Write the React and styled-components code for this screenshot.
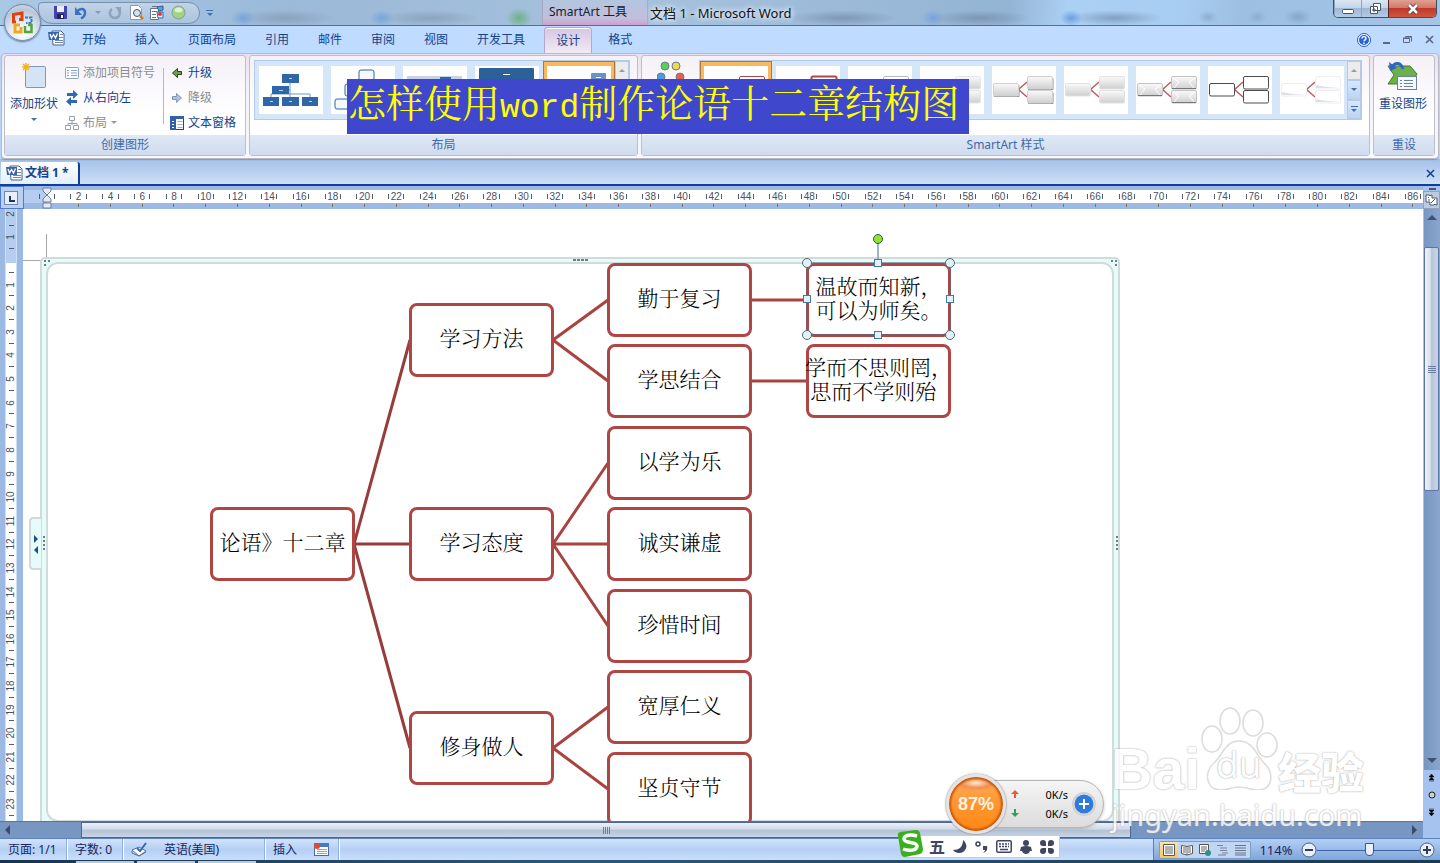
import React from 'react'
import styled, { createGlobalStyle, css } from 'styled-components'

const red = '#af4643'

const tabs = ['开始', '插入', '页面布局', '引用', '邮件', '审阅', '视图', '开发工具']
const rulerNumbers = Array.from({ length: 44 }, (_, i) => i * 2)
const sideNumbers = ['2', '1', '', ...Array.from({ length: 23 }, (_, i) => String(i + 1))]

// places on the drawing canvas
const nodes = [
    { x: 187, y: 298, lines: ['论语》十二章'] },
    { x: 386, y: 94, lines: ['学习方法'] },
    { x: 386, y: 298, lines: ['学习态度'] },
    { x: 386, y: 502, lines: ['修身做人'] },
    { x: 584, y: 54, lines: ['勤于复习'] },
    { x: 584, y: 135, lines: ['学思结合'] },
    { x: 584, y: 217, lines: ['以学为乐'] },
    { x: 584, y: 298, lines: ['诚实谦虚'] },
    { x: 584, y: 380, lines: ['珍惜时间'] },
    { x: 584, y: 461, lines: ['宽厚仁义'] },
    { x: 584, y: 543, lines: ['坚贞守节'] },
    { x: 783, y: 54, lines: ['温故而知新，', '可以为师矣。'] },
    { x: 783, y: 135, lines: ['学而不思则罔，', '思而不学则殆\u2002'] },
]
const links = [
    [0, 1], [0, 2], [0, 3], [1, 4], [1, 5], [2, 6], [2, 7], [2, 8], [3, 9], [3, 10], [4, 11], [5, 12],
]
const styleThumbs = ['outline', 'bold', 'grey', 'soft', 'shadow', 'flat', 'bevel', 'black', 'faint']

function WordIcon() {
    return (
        <svg width="17" height="16" viewBox="0 0 17 16" aria-hidden="true">
            <path d="M4 1h9l3 3v11H5z" fill="#fff" stroke="#4a6288" />
            <path d="M12 4.500h3M11 7.500h4M7 10.500h8M7 12.500h8" stroke="#7088ac" />
            <path d="M0 2h11v8H1z" fill="#3c62b0" />
            <path d="M2 4l1.500 4L5.500 4.500 7.500 8 9.500 3.500" fill="none" stroke="#fff" strokeWidth="1.300" />
        </svg>
    )
}

function OfficeLogo() {
    return (
        <svg width="24" height="24" viewBox="0 0 24 24" fill="none" aria-hidden="true">
            <path d="M5 11H2.500V3.500L11 2v6.500H8" stroke="#d8430f" strokeWidth="3" />
            <path d="M14 6.500h6.500V12H15" stroke="#2f7fc4" strokeWidth="2" strokeDasharray="3 1" />
            <path d="M9 14H4v7h6v-5" stroke="#f3a81c" strokeWidth="3" />
            <path d="M14 15v6h6.500v-7H17" stroke="#58a33b" strokeWidth="2.500" />
        </svg>
    )
}

function LayoutThumb({ kind }) {
    return (
        <svg width="64" height="48" viewBox="0 0 64 48" aria-hidden="true">
            {kind === 0 && (
                <g fill="#2e66a8">
                    <path d="M31 17v14M12 31v-3h39v3M31 24h-2" fill="none" stroke="#6f99c6" />
                    <rect x="23" y="8" width="17" height="9" />
                    <rect x="13" y="20" width="17" height="8" />
                    <rect x="4" y="31" width="16" height="9" />
                    <rect x="23" y="31" width="17" height="9" />
                    <rect x="43" y="31" width="16" height="9" />
                    <path d="M30 12.500h3M20 24.500h4M11 35.500h3M30 35.500h3M50 35.500h3" stroke="#b8d2ec" />
                </g>
            )}
            {kind === 1 && (
                <g fill="#f4f8fc" stroke="#2e66a8">
                    <rect x="28" y="4" width="15" height="12" rx="2" />
                    <rect x="14" y="18" width="15" height="12" rx="2" />
                    <rect x="4" y="33" width="14" height="10" rx="2" />
                    <rect x="45" y="33" width="14" height="10" rx="2" />
                </g>
            )}
            {kind === 2 && (
                <g>
                    <rect x="4" y="10" width="55" height="8" fill="#c9d3e2" />
                    <rect x="37" y="11" width="11" height="6" fill="#2e66a8" />
                </g>
            )}
            {kind === 3 && (
                <g>
                    <rect x="4" y="2" width="55" height="14" rx="1" fill="#2b6099" />
                    <path d="M28 8.500h7" stroke="#fff" />
                </g>
            )}
            {kind === 4 && (
                <g>
                    <rect x="44" y="7" width="15" height="9" rx="1" fill="#6b90c4" />
                    <path d="M49 11.500h5" stroke="#fff" />
                </g>
            )}
        </svg>
    )
}

const looks = {
    outline: { fill: '#fff', stroke: red },
    bold: { fill: '#fff', stroke: red, strokeWidth: 2 },
    grey: { fill: '#fff', stroke: '#bdbdbd' },
    soft: { fill: 'url(#softGrey)', stroke: '#e6e6e6' },
    shadow: { fill: 'url(#softGrey)', stroke: '#d0d0d0' },
    flat: { fill: 'url(#softGrey)', stroke: '#e2e2e2' },
    bevel: { fill: 'url(#softGrey)', stroke: '#c4c4c4' },
    black: { fill: '#fff', stroke: '#4c4c4c' },
    faint: { fill: '#fff', stroke: '#ededf3' },
}

function StyleThumb({ look }) {
    const boxes = [[1, 17], [35, 10], [35, 24]]
    return (
        <svg width="64" height="48" viewBox="0 0 64 48" aria-hidden="true">
            <defs>
                <linearGradient id="softGrey" x1="0" y1="0" x2="0" y2="1">
                    <stop offset="0" stopColor="#fafafa" />
                    <stop offset="1" stopColor="#cfcfcf" />
                </linearGradient>
            </defs>
            <path d="M35 16l-8.500 7.500L35 31" fill="none" stroke="#b9605c" strokeWidth="1.500" />
            {boxes.map(([x, y]) => (
                <g key={y}>
                    {look === 'shadow' && <path d={`M${x + 1} ${y + 13.5}h25v-11`} stroke="#8f8f8f" fill="none" />}
                    <rect x={x + .5} y={y + .5} width="25" height="12.500" rx="1.500" {...looks[look]} />
                    {look === 'bevel' && <path d={`M${x + 2} ${y + 2}l6 4 -5 6M${x + 24} ${y + 2}l-6 4 5 6`} stroke="#fff" fill="none" />}
                    {look === 'bevel' && <path d={`M${x + 1} ${y + 12.5}h24`} stroke="#777" />}
                    {look === 'faint' && <path d={`M${x + 1} ${y + 9}q12 3 24 3h-24z`} fill="#dfdfe8" />}
                </g>
            ))}
        </svg>
    )
}

function Gallery({ label, children }) {
    return (
        <GalleryBox role="group" aria-label={label}>
            <GalleryCells>{children}</GalleryCells>
            <GalleryScroll>
                <GalleryArrow aria-label="上一行" $off><Caret $up $grey /></GalleryArrow>
                <GalleryArrow aria-label="下一行"><Caret /></GalleryArrow>
                <GalleryArrow aria-label="其他"><More /><Caret /></GalleryArrow>
            </GalleryScroll>
        </GalleryBox>
    )
}

function Diagram() {
    return (
        <Canvas>
            <MarginMark />
            <Frame>
                <FrameInner />
            </Frame>
            <PaneTab aria-label="文本窗格">
                <svg width="10" height="22" viewBox="0 0 10 22" fill="#17508c" aria-hidden="true">
                    <path d="M3 2v8l4-4zM7 13v8l-4-4z" />
                </svg>
            </PaneTab>
            <Wires aria-hidden="true">
                {links.map(([a, b]) => (
                    <line
                        key={b}
                        x1={nodes[a].x + 144}
                        y1={nodes[a].y + 37}
                        x2={nodes[b].x + 1}
                        y2={nodes[b].y + 37}
                        stroke={a === 0 ? '#963c3a' : '#a9433f'}
                        strokeWidth="3"
                    />
                ))}
                <g fill="#6f7f86">
                    <path d="M21 51h2v2h-2zM25 51h2v2h-2zM21 55h2v2h-2z" />
                    <path d="M1088 51h2v2h-2zM1092 51h2v2h-2zM1092 55h2v2h-2z" />
                    <path d="M550 50h3v2h-3zM554 50h3v2h-3zM558 50h3v2h-3zM562 50h3v2h-3z" />
                    <path d="M20 327h2v2h-2zM20 331h2v2h-2zM20 335h2v2h-2zM20 339h2v2h-2z" />
                    <path d="M1093 327h2v2h-2zM1093 331h2v2h-2zM1093 335h2v2h-2zM1093 339h2v2h-2z" />
                </g>
            </Wires>
            {nodes.map(n => (
                <Node key={n.lines[0]} style={{ left: n.x, top: n.y }}>
                    {n.lines.map(l => <span key={l}>{l}</span>)}
                </Node>
            ))}
            <Wires aria-hidden="true">
                <path d="M855 34v18" stroke="#7f9dba" strokeWidth="1.500" />
                <rect x="784" y="54" width="143" height="72" fill="none" stroke="#4d6c87" />
                <circle cx="855" cy="30" r="4.500" fill="#8be33c" stroke="#3f5a2c" />
                {[[784, 54], [927, 54], [784, 126], [927, 126]].map(([x, y]) => (
                    <circle key={x + '-' + y} cx={x} cy={y} r="4.500" fill="#dff3f5" stroke="#54697a" />
                ))}
                {[[855, 54], [855, 126], [784, 90], [927, 90]].map(([x, y]) => (
                    <rect key={x + '-' + y} x={x - 3.5} y={y - 3.5} width="7" height="7" fill="#dff3f9" stroke="#41799f" />
                ))}
            </Wires>
        </Canvas>
    )
}

function Watermark() {
    return (
        <Mark>
            <MarkRow>
                <MarkLatin>Bai</MarkLatin>
                <MarkPaw>
                    <svg width="78" height="84" viewBox="0 0 78 84" fill="#fff" stroke="#d4d4d4" strokeWidth="1.500" aria-hidden="true">
                        <ellipse cx="12" cy="33" rx="10" ry="13" />
                        <ellipse cx="30" cy="15" rx="10" ry="13" />
                        <ellipse cx="53" cy="17" rx="10" ry="13" />
                        <ellipse cx="67" cy="39" rx="10" ry="12" />
                        <path d="M39 35c-14 0-16 14-25 22-10 8-9 27 7 27 8 0 10-3 18-3s11 3 19 3c15 0 16-17 7-26-9-9-12-23-26-23z" />
                    </svg>
                    <span>du</span>
                </MarkPaw>
                <MarkHan>经验</MarkHan>
            </MarkRow>
            <MarkUrl>jingyan.baidu.com</MarkUrl>
        </Mark>
    )
}

export default function App() {
    return (
        <Window>
            <GlobalStyle />
            <TitleBar>
                <QuickZone>
                    <QuickBar>
                        <Tool aria-label="保存">
                            <svg width="15" height="15" viewBox="0 0 15 15">
                                <path d="M1 1h13v13H2l-1-1z" fill="#4444a8" />
                                <path d="M4 1h7v6H4z" fill="#e9effa" />
                                <path d="M4 9h7v5H4z" fill="#22225c" />
                                <path d="M8 10h2v3H8z" fill="#fff" />
                            </svg>
                        </Tool>
                        <Tool aria-label="撤消">
                            <svg width="14" height="14" viewBox="0 0 14 14">
                                <path d="M3 5.500C6 2 11 2 11 7c0 2-1 4-4 5.500" fill="none" stroke="#3d70c4" strokeWidth="2.500" />
                                <path d="M1 1v8h7z" fill="#3d70c4" />
                            </svg>
                        </Tool>
                        <Tool aria-label="撤消列表" $slim><Caret $pale /></Tool>
                        <Tool aria-label="恢复">
                            <svg width="14" height="14" viewBox="0 0 14 14">
                                <path d="M4 3C0 6 2 12 7 12s6-6 3-9" fill="none" stroke="#8fa3bf" strokeWidth="2.500" />
                                <path d="M7 1h6v6z" fill="#8fa3bf" />
                            </svg>
                        </Tool>
                        <Tool aria-label="打印预览">
                            <svg width="15" height="15" viewBox="0 0 15 15">
                                <path d="M1.500.500h8l3 3v11h-11z" fill="#fff" stroke="#8d9bb0" />
                                <circle cx="8" cy="8" r="3.500" fill="#cfe3f5" stroke="#47566b" />
                                <path d="M11 11l3 3" stroke="#c88012" strokeWidth="2.500" />
                            </svg>
                        </Tool>
                        <Tool aria-label="邮件合并">
                            <svg width="16" height="15" viewBox="0 0 16 15">
                                <path d="M1.500 3.500h8v11h-8z" fill="#fff" stroke="#65748c" />
                                <path d="M3 6.500h5M3 9.500h4M3 12.500h4M3 1.500h6" stroke="#65748c" />
                                <path d="M8 2l6-1v4l-4 1z" fill="#5aa0de" stroke="#2c5f9b" />
                                <path d="M8 7h6v6H9z" fill="#dcebfa" stroke="#2f68b0" />
                                <circle cx="11" cy="9" r="2" fill="#dc4030" />
                            </svg>
                        </Tool>
                        <Tool aria-label="绿色按钮">
                            <svg width="15" height="15" viewBox="0 0 15 15">
                                <circle cx="7.500" cy="7.500" r="6.500" fill="#9ed67e" stroke="#8b9aa8" />
                                <ellipse cx="7.500" cy="5" rx="4" ry="2.500" fill="#dcf3cd" />
                            </svg>
                        </Tool>
                    </QuickBar>
                    <QuickMore aria-label="自定义快速访问工具栏"><More /><Caret /></QuickMore>
                </QuickZone>
                <Context>SmartArt 工具</Context>
                <Title>文档 1 - Microsoft Word</Title>
                <WindowButtons>
                    <WinButton aria-label="最小化">
                        <svg width="14" height="12" viewBox="0 0 14 12"><rect x="1.500" y="6.500" width="11" height="4" rx="1" fill="#fff" stroke="#4a5564" /></svg>
                    </WinButton>
                    <WinButton aria-label="还原">
                        <svg width="13" height="13" viewBox="0 0 13 13" fill="#fff" stroke="#4a5564">
                            <path d="M4.500 1.500h7v7h-7zM1.500 4.500h7v7h-7zM4 7h2v2H4z" />
                        </svg>
                    </WinButton>
                    <WinButton aria-label="关闭" $close>
                        <svg width="14" height="12" viewBox="0 0 14 12">
                            <path d="M3 2l8 8M11 2l-8 8" stroke="#5b3a3c" strokeWidth="4.500" />
                            <path d="M3 2l8 8M11 2l-8 8" stroke="#fff" strokeWidth="2.500" />
                        </svg>
                    </WinButton>
                </WindowButtons>
            </TitleBar>
            <Orb aria-label="Office 按钮"><OfficeLogo /></Orb>

            <TabRow>
                <WordIcon />
                <Tabs>
                    {tabs.map(t => <Tab key={t}>{t}</Tab>)}
                    <Tab $active>设计</Tab>
                    <Tab>格式</Tab>
                </Tabs>
                <DocButtons>
                    <Plain aria-label="帮助">
                        <svg width="14" height="14" viewBox="0 0 14 14">
                            <circle cx="7" cy="7" r="6.500" fill="#fff" stroke="#2c5bb8" />
                            <circle cx="7" cy="7" r="5" fill="#2a64d8" />
                            <path d="M5 5.500c0-2.500 4-2.500 4 0C9 7 7 6.800 7 8.300M7 9.500v1.500" fill="none" stroke="#fff" strokeWidth="1.400" />
                        </svg>
                    </Plain>
                    <Plain aria-label="最小化文档"><svg width="8" height="8" viewBox="0 0 8 8"><path d="M0 7h7" stroke="#5d6a7c" strokeWidth="2" /></svg></Plain>
                    <Plain aria-label="还原文档">
                        <svg width="10" height="8" viewBox="0 0 10 8" fill="none" stroke="#5d6a7c"><path d="M.500 2.500h6v4h-6zM2.500.500h6v5M0 2h7M2 1h7" /></svg>
                    </Plain>
                    <Plain aria-label="关闭文档"><svg width="9" height="9" viewBox="0 0 9 9"><path d="M1 1l7 7M8 1L1 8" stroke="#5d6a7c" strokeWidth="1.700" /></svg></Plain>
                </DocButtons>
            </TabRow>

            <Ribbon>
                <Group $width="242px">
                    <GroupBody>
                        <BigButton>
                            <svg width="26" height="28" viewBox="0 0 26 28" aria-hidden="true">
                                <rect x="4.500" y="4.500" width="20" height="21" rx="1" fill="#d5e4f5" stroke="#8096b8" />
                                <path d="M5 1v8M1 5h8M2 2l6 6M8 2L2 8" stroke="#efb81e" strokeWidth="1.500" />
                            </svg>
                            <span>添加形状</span>
                            <Caret />
                        </BigButton>
                        <SmallColumn $width="98px">
                            <SmallButton disabled>
                                <svg width="14" height="12" viewBox="0 0 14 12">
                                    <rect x=".500" y=".500" width="13" height="11" rx="1" fill="#fafcff" stroke="#8ca0bf" />
                                    <path d="M2 3.500h2M2 6h2M2 8.500h2M6 3.500h6M6 6h6M6 8.500h6" stroke="#8ca0bf" />
                                </svg>
                                添加项目符号
                            </SmallButton>
                            <SmallButton>
                                <svg width="14" height="16" viewBox="0 0 14 16" fill="#2c68bb">
                                    <path d="M2 3h6V0l5 4.500L8 9V6H2zM12 10H6V7l-5 4.500L6 16v-3h6z" />
                                </svg>
                                从右向左
                            </SmallButton>
                            <SmallButton disabled>
                                <svg width="14" height="14" viewBox="0 0 14 14" fill="#fff" stroke="#95a1b3">
                                    <path d="M7 5v4M3 10V7.500h9V10" />
                                    <path d="M4.500.500h5v4h-5zM.500 9.500h5v4h-5zM8.500 9.500h5v4h-5z" />
                                </svg>
                                布局 <Caret $grey />
                            </SmallButton>
                        </SmallColumn>
                        <Divider />
                        <SmallColumn $width="67px">
                            <SmallButton>
                                <svg width="14" height="12" viewBox="0 0 14 12"><path d="M2.500 6l5-4.500v3h4v3h-4v3z" fill="#6da04a" stroke="#26431b" /></svg>
                                升级
                            </SmallButton>
                            <SmallButton disabled>
                                <svg width="14" height="12" viewBox="0 0 14 12"><path d="M11.500 6l-5-4.500v3h-4v3h4v3z" fill="#b3c2d8" stroke="#8397b5" /></svg>
                                降级
                            </SmallButton>
                            <SmallButton>
                                <svg width="14" height="14" viewBox="0 0 14 14">
                                    <rect x=".500" y=".500" width="13" height="13" fill="#fff" stroke="#24477f" />
                                    <path d="M0 0h14v3H0zM0 0h6v14H0z" fill="#315fa8" />
                                    <path d="M2 5.500h2M2 8.500h2M2 11.500h2" stroke="#fff" />
                                    <path d="M7.500 5.500h5M7.500 8.500h5M7.500 11.500h5" stroke="#a0afc6" />
                                </svg>
                                文本窗格
                            </SmallButton>
                        </SmallColumn>
                    </GroupBody>
                    <GroupName>创建图形</GroupName>
                </Group>
                <Group $width="389px">
                    <GroupBody>
                        <Gallery label="布局">
                            {[0, 1, 2, 3, 4].map(k => (
                                <Cell key={k} $on={k === 4} aria-label={'布局 ' + (k + 1)}><LayoutThumb kind={k} /></Cell>
                            ))}
                        </Gallery>
                    </GroupBody>
                    <GroupName>布局</GroupName>
                </Group>
                <Group $grow>
                    <GroupBody>
                        <ColorButton aria-label="更改颜色">
                            <svg width="28" height="28" viewBox="0 0 28 28" stroke="#6c7c88">
                                <circle cx="8" cy="5" r="4" fill="#58cf58" />
                                <circle cx="19" cy="5" r="4" fill="#ecd94c" />
                                <circle cx="4" cy="16" r="4" fill="#4b9ae8" />
                                <circle cx="23" cy="16" r="4" fill="#e8604c" />
                            </svg>
                        </ColorButton>
                        <Gallery label="SmartArt 样式">
                            {styleThumbs.map((s, i) => (
                                <Cell key={s} $on={i === 0} aria-label={'样式 ' + (i + 1)}><StyleThumb look={s} /></Cell>
                            ))}
                        </Gallery>
                    </GroupBody>
                    <GroupName>SmartArt 样式</GroupName>
                </Group>
                <Group $width="62px">
                    <GroupBody>
                        <BigButton>
                            <svg width="32" height="30" viewBox="0 0 32 30" aria-hidden="true">
                                <path d="M1 5h22l7 8-6 10H1l6-9z" fill="#6cb04c" stroke="#3e7c2c" />
                                <rect x="10.500" y="15.500" width="19" height="13" fill="#f4f8fc" stroke="#6c8298" />
                                <path d="M13 19.500h2M13 22.500h2M13 25.500h2M17 19.500h9M17 22.500h9M17 25.500h9" stroke="#6c8298" />
                                <path d="M5 6c3-5 9-5 11 2" fill="none" stroke="#2f66c4" strokeWidth="3" />
                                <path d="M2 1l1 9 7-3z" fill="#2f66c4" />
                            </svg>
                            <span>重设图形</span>
                        </BigButton>
                    </GroupBody>
                    <GroupName>重设</GroupName>
                </Group>
                <Caption>怎样使用<span>word</span>制作论语十二章结构图</Caption>
            </Ribbon>

            <DocTabs>
                <DocTab><WordIcon />文档 1 *</DocTab>
                <Plain aria-label="关闭标签">
                    <svg width="9" height="9" viewBox="0 0 9 9"><path d="M1 1l7 7M8 1L1 8" stroke="#123f8c" strokeWidth="1.500" /></svg>
                </Plain>
            </DocTabs>

            <Work>
                <Main>
                    <TopRuler>
                        <Corner aria-label="制表符"><i /></Corner>
                        <Track>
                            <TrackScale>
                                {rulerNumbers.map(n => <RulerMark key={n}>{n || ''}</RulerMark>)}
                            </TrackScale>
                            <Indent width="10" height="22" viewBox="0 0 10 22" aria-hidden="true">
                                <path d="M1 1h8v3L5 8 1 4zM1 15v-3l4-4 4 4v3zM1 16h8v5H1z" fill="#e3eaf5" stroke="#6a7f9f" />
                            </Indent>
                        </Track>
                    </TopRuler>
                    <Page>
                        <SideRuler>
                            <SideScale>
                                {sideNumbers.map((n, i) => <SideMark key={i}><span>{n}</span></SideMark>)}
                            </SideScale>
                        </SideRuler>
                        <Diagram />
                    </Page>
                    <HScroll>
                        <ArrowButton aria-label="向左滚动"><svg width="6" height="10" viewBox="0 0 6 10"><path d="M5 0v10L0 5z" fill="#3a4c6c" /></svg></ArrowButton>
                        <HThumb><i /></HThumb>
                        <ArrowButton aria-label="向右滚动" $end><svg width="6" height="10" viewBox="0 0 6 10"><path d="M0 0v10l5-5z" fill="#3a4c6c" /></svg></ArrowButton>
                    </HScroll>
                </Main>
                <Side>
                    <SplitBox><i /></SplitBox>
                    <RulerToggle aria-label="标尺">
                        <svg width="13" height="12" viewBox="0 0 13 12" fill="#fff" stroke="#4b5c74"><path d="M1 1h3l1 1 1-1h1v3h5v7h-1l-1-1-1 1H5V8H1z" /><path d="M3 3l1 1M8 6l1 1M6 9l4-4M3 6h2" /></svg>
                    </RulerToggle>
                    <VScroll>
                        <VArrow aria-label="向上滚动"><svg width="10" height="6" viewBox="0 0 10 6"><path d="M0 5h10L5 0z" fill="#3f5274" /></svg></VArrow>
                        <VThumb><i /></VThumb>
                        <VSpace />
                        <VArrow aria-label="向下滚动"><svg width="10" height="6" viewBox="0 0 10 6"><path d="M0 0h10L5 5z" fill="#3f5274" /></svg></VArrow>
                    </VScroll>
                    <Browse>
                        <Plain aria-label="前一页"><svg width="7" height="8" viewBox="0 0 7 8"><path d="M3.500 0L6 3H1zM3.500 3L6 6H1zM1 7h5" stroke="#111" strokeWidth=".500" /></svg></Plain>
                        <Plain aria-label="选择浏览对象"><svg width="8" height="8" viewBox="0 0 8 8"><circle cx="4" cy="4" r="3" fill="#cfd0c8" stroke="#222" /></svg></Plain>
                        <Plain aria-label="下一页"><svg width="7" height="8" viewBox="0 0 7 8"><path d="M3.500 8L6 5H1zM3.500 5L6 2H1zM1 1h5" stroke="#111" strokeWidth=".500" /></svg></Plain>
                    </Browse>
                </Side>
                <Watermark />
            </Work>

            <Status>
                <StatusItem $width="67px">页面: 1/1</StatusItem>
                <StatusItem $width="56px">字数: 0</StatusItem>
                <StatusItem $width="142px">
                    <svg width="17" height="15" viewBox="0 0 17 15" aria-hidden="true">
                        <path d="M1 8l7-3 7 4-7 5z" fill="#fff" stroke="#5272a8" />
                        <path d="M1 9v2l7 3 7-4" fill="none" stroke="#5272a8" />
                        <path d="M6 6l3 3 6-8" fill="none" stroke="#3566b8" strokeWidth="2" />
                    </svg>
                    <Lang>英语(美国)</Lang>
                </StatusItem>
                <StatusItem $width="74px">
                    插入
                    <Macro width="15" height="13" viewBox="0 0 15 13" aria-hidden="true">
                        <rect x=".500" y=".500" width="14" height="12" fill="#fff" stroke="#4a6aa5" />
                        <path d="M0 0h15v4H0z" fill="#4a78c4" />
                        <path d="M3 6.500h10M3 8.500h10M3 10.500h10" stroke="#91a5c4" />
                        <circle cx="3" cy="3" r="3" fill="#dc4b2c" />
                    </Macro>
                </StatusItem>
                <StatusRight>
                    <Views>
                        <View $on aria-label="页面视图"><svg width="12" height="12" viewBox="0 0 12 12"><path d="M.500.500h11v11H.500z" fill="#fff" stroke="#555" /><path d="M2 3h8M2 5h8M2 7h8M2 9h8" stroke="#666" /></svg></View>
                        <View aria-label="阅读版式"><svg width="12" height="12" viewBox="0 0 12 12"><path d="M.500 1.500L6 2.500l5.500-1v8L6 11 .500 9.500z" fill="#fff" stroke="#555" /><path d="M6 2v9M2 4h3M2 6h3M7 4h3M7 6h3M2 8h3M7 8h3" stroke="#666" /></svg></View>
                        <View aria-label="Web 版式"><svg width="12" height="12" viewBox="0 0 12 12"><path d="M.500.500h9v9h-9z" fill="#fff" stroke="#555" /><path d="M2 3h6M2 5h6M2 7h4" stroke="#666" /><circle cx="9" cy="9" r="3" fill="#2f8f8a" /></svg></View>
                        <View aria-label="大纲视图"><svg width="12" height="12" viewBox="0 0 12 12"><path d="M0 1.500h6M3 4h7M3 6.500h7M5 9h6M1 11h8" stroke="#77839a" /></svg></View>
                        <View aria-label="普通视图"><svg width="12" height="12" viewBox="0 0 12 12"><path d="M0 1.500h11M0 4h11M0 6.500h11M0 9h11M0 11h11" stroke="#66738c" /></svg></View>
                    </Views>
                    <Percent>114%</Percent>
                    <ZoomButton aria-label="缩小">
                        <svg width="16" height="16" viewBox="0 0 16 16"><circle cx="8" cy="8" r="7" fill="#e9f0fa" stroke="#45628f" /><path d="M4 8h8" stroke="#333f55" strokeWidth="2" /></svg>
                    </ZoomButton>
                    <Slider type="range" min="10" max="190" defaultValue="102" aria-label="显示比例" />
                    <ZoomButton aria-label="放大">
                        <svg width="16" height="16" viewBox="0 0 16 16"><circle cx="8" cy="8" r="7" fill="#e9f0fa" stroke="#45628f" /><path d="M4 8h8M8 4v8" stroke="#333f55" strokeWidth="2" /></svg>
                    </ZoomButton>
                </StatusRight>
            </Status>
            <TaskEdge><i /><i /><i /></TaskEdge>

            <NetMeter>
                <Ball>87%</Ball>
                <Rates>
                    <Rate><svg width="8" height="9" viewBox="0 0 8 9"><path d="M4 0l4 4H5v4H3V4H0z" fill="#f0583c" /></svg>0K/s</Rate>
                    <Rate><svg width="8" height="9" viewBox="0 0 8 9"><path d="M4 8l4-4H5V0H3v4H0z" fill="#2ba35a" /></svg>0K/s</Rate>
                </Rates>
                <Boost aria-label="加速">
                    <svg width="20" height="20" viewBox="0 0 20 20"><circle cx="10" cy="10" r="9.500" fill="#2f7bdc" /><path d="M5 10h10M10 5v10" stroke="#fff" strokeWidth="2" /></svg>
                </Boost>
            </NetMeter>
            <Ime>
                <ImeLogo viewBox="0 0 28 28" width="28" height="28" aria-hidden="true">
                    <path d="M2 6q-1-3 2-4L20 0q3 0 4 3l3 16q0 4-3 5L9 27q-3 0-4-3z" fill="#3bb01e" />
                    <path d="M21 6c-6-2-13-1-13 3 0 5 13 2 13 7 0 5-9 5-14 3" fill="none" stroke="#fff" strokeWidth="3.500" />
                </ImeLogo>
                <b>五</b>
                <svg width="14" height="14" viewBox="0 0 14 14" fill="#3e4660"><path d="M10 0c4 3 5 9 0 12C7 14 2 13 0 10c6 0 10-3 10-10z" /></svg>
                <svg width="13" height="13" viewBox="0 0 13 13" fill="#3e4660"><circle cx="3" cy="4" r="2" fill="none" stroke="#3e4660" strokeWidth="1.500" /><path d="M8 6h4c1 4-1 6-4 7 1-1 2-2 2-3H8z" /></svg>
                <svg width="16" height="13" viewBox="0 0 16 13"><rect x=".750" y=".750" width="14.500" height="11.500" rx="1.500" fill="#fff" stroke="#3e4660" strokeWidth="1.500" /><path d="M3 4h10M3 6.500h10" stroke="#3e4660" strokeWidth="1.500" strokeDasharray="2 1" /><path d="M4 9.500h8" stroke="#3e4660" strokeWidth="1.500" /></svg>
                <svg width="12" height="14" viewBox="0 0 12 14" fill="#3e4660"><circle cx="6" cy="3" r="3" /><path d="M1 7q5-2 10 0l1 4h-2q-1 3-4 3t-4-3H0z" /></svg>
                <svg width="14" height="14" viewBox="0 0 14 14" fill="#3e4660"><path d="M0 3a3 3 0 0 1 6 0v3H3a3 3 0 0 1-3-3zM8 3a3 3 0 1 1 3 3H8zM0 11a3 3 0 0 1 3-3h3v3a3 3 0 0 1-6 0zM8 8h3a3 3 0 1 1-3 3z" /></svg>
            </Ime>
        </Window>
    )
}

const GlobalStyle = createGlobalStyle`
    *{
        box-sizing: border-box;
    }
    body{
        margin: 0;
        overflow: hidden;
    }
    button{
        font: inherit;
        color: inherit;
        background: none;
        border: 0;
        margin: 0;
        padding: 0;
    }
    svg{
        display: block;
        flex: none;
    }
`

const Window = styled.div`
    position: relative;
    display: flex;
    flex-direction: column;
    height: 100vh;
    background: #bfdbff;
    color: #15428b;
    font-family: "Noto Sans", "Noto Sans CJK SC", sans-serif;
    font-size: 12px;
    line-height: 16px;
`
const Caret = styled.i`
    width: 0;
    height: 0;
    flex: none;
    border: 3px solid transparent;
    ${p => p.$up ? 'border-top: 0; border-bottom: 3px solid' : 'border-bottom: 0; border-top: 3px solid'};
    border-${p => p.$up ? 'bottom' : 'top'}-color: ${p => p.$grey ? '#9a9a9a' : p.$pale ? '#7c9ac4' : '#3f6fae'};
`
const More = styled.i`
    display: block;
    width: 7px;
    height: 1px;
    margin-bottom: 2px;
    background: #3f6fae;
`
const Plain = styled.button`
    display: flex;
    align-items: center;
    justify-content: center;
`

/* title bar */
const TitleBar = styled.header`
    display: flex;
    height: 26px;
    flex: none;
    border-bottom: 1px solid #55708c;
    background:
        radial-gradient(ellipse 12px 8px at 243px 18px, #6f9fdccc 0%, #6f9fdc00 100%),
        radial-gradient(ellipse 50px 8px at 285px 18px, #8197b0aa 0%, #8197b000 100%),
        radial-gradient(ellipse 12px 8px at 382px 18px, #6f9fdccc 0%, #6f9fdc00 100%),
        radial-gradient(ellipse 50px 8px at 430px 18px, #8197b0aa 0%, #8197b000 100%),
        radial-gradient(ellipse 13px 10px at 519px 18px, #5faf6fcc 0%, #6faf8000 100%),
        radial-gradient(ellipse 55px 8px at 842px 18px, #6f87a3aa 0%, #8097b000 100%),
        radial-gradient(ellipse 11px 8px at 933px 18px, #6f9fdccc 0%, #6f9fdc00 100%),
        radial-gradient(ellipse 50px 8px at 980px 18px, #6f87a3aa 0%, #8097b000 100%),
        radial-gradient(ellipse 11px 8px at 1071px 18px, #5d92d8cc 0%, #5d92d800 100%),
        radial-gradient(ellipse 48px 8px at 1115px 18px, #6f89a8aa 0%, #7d96b200 100%),
        radial-gradient(ellipse 10px 7px at 1208px 17px, #8aa9cbcc 0%, #8aa9cb00 100%),
        radial-gradient(ellipse 10px 7px at 1257px 17px, #8aa9cbcc 0%, #8aa9cb00 100%),
        radial-gradient(ellipse 14px 8px at 1298px 17px, #7f9fc4cc 0%, #7f9fc400 100%),
        linear-gradient(100deg, #a9c8e6 0%, #9bb9d8 20%, #a5c1dd 45%, #94b4d4 70%, #abd0f4 74%, #a8cdf2 82%, #9dc0e2 86%, #a3c4e6 100%);
`
const QuickZone = styled.div`
    display: flex;
    align-items: center;
    width: 542px;
    padding-left: 38px;
`
const QuickBar = styled.div`
    display: flex;
    align-items: center;
    gap: 5px;
    width: 162px;
    height: 22px;
    padding-left: 13px;
    border: 1px solid #7a8fa8;
    border-radius: 4px 11px 11px 14px;
    background: linear-gradient(#c0d3e8, #abc4df);
`
const Tool = styled.button`
    display: flex;
    align-items: center;
    justify-content: center;
    width: ${p => p.$slim ? '8px' : '16px'};
    height: 16px;
`
const QuickMore = styled.button`
    display: flex;
    flex-direction: column;
    align-items: center;
    padding: 0 6px;
`
const Context = styled.div`
    width: 106px;
    padding: 4px 0 0 6px;
    border-left: 1px solid #a6aac8;
    border-right: 1px solid #a6aac8;
    background: linear-gradient(#b3c6df, #c3bddb 75%, #cf9fcf);
    color: #15202e;
    white-space: nowrap;
`
const Title = styled.div`
    flex: 1;
    padding: 5px 0 0 2px;
    color: #111;
    font-size: 13px;
    white-space: nowrap;
    text-shadow: 0 0 6px #fff, 0 0 6px #fff;
`
const WindowButtons = styled.div`
    display: flex;
    height: 18px;
    margin-right: 3px;
    border: 1px solid #3f5066;
    border-top: 0;
    border-radius: 0 0 5px 5px;
    overflow: hidden;
`
const WinButton = styled.button`
    display: flex;
    align-items: center;
    justify-content: center;
    width: ${p => p.$close ? '48px' : '27px'};
    border-left: ${p => p.$close ? '1px solid #5a2020' : '1px solid #8fa5bf'};
    background: ${p => p.$close
        ? 'linear-gradient(#e0a090 0%, #d07a68 45%, #c0392b 50%, #d0553c 100%)'
        : 'linear-gradient(#dbe7f4 0%, #c3d5ea 45%, #9fb8d4 50%, #b4cbe4 100%)'};
`
const Orb = styled.button`
    position: absolute;
    left: 4px;
    top: 4px;
    width: 37px;
    height: 37px;
    display: flex;
    align-items: center;
    justify-content: center;
    border: 1px solid #7388a6;
    border-radius: 50%;
    background: radial-gradient(circle at 50% 80%, #fff 0%, #e6ecf4 35%, #b9c6d8 70%, #dfe7f1 100%);
    box-shadow: 0 1px 2px #5d7394;
`

/* tabs */
const TabRow = styled.nav`
    display: flex;
    height: 27px;
    flex: none;
    padding-left: 48px;
    > svg{
        margin-top: 4px;
    }
`
const Tabs = styled.div`
    display: flex;
    flex: 1;
    gap: 1px;
    padding-left: 3px;
`
const Tab = styled.button`
    padding: 0 14px;
    white-space: nowrap;
    ${p => p.$active && css`
        margin: 1px 1px 0 4px;
        padding: 0 11px;
        border: 1px solid #b7a7cb;
        border-bottom: 0;
        border-radius: 4px 4px 0 0;
        background: linear-gradient(#d6c6e2, #f2ebf6);
        box-shadow: inset 0 1px 0 #fff;
    `}
`
const DocButtons = styled.div`
    display: flex;
    align-items: center;
    gap: 12px;
    padding-right: 6px;
`

/* ribbon */
const Ribbon = styled.section`
    position: relative;
    display: flex;
    gap: 3px;
    height: 106px;
    flex: none;
    margin: 0 1px;
    padding: 1px 3px 2px 2px;
    border: 1px solid #b9b9c6;
    border-radius: 4px;
    background: linear-gradient(#ebe0ef, #f4f1f8 30%, #f6f8fc);
    box-shadow: 0 1px 1px #7f98bb;
`
const Group = styled.div`
    display: flex;
    flex-direction: column;
    flex: ${p => p.$grow ? '1' : 'none'};
    width: ${p => p.$width || 'auto'};
    min-width: 0;
    border: 1px solid #bcbfc9;
    border-radius: 3px;
    background: linear-gradient(#f4f1f8, #fff 60%);
    overflow: hidden;
`
const GroupBody = styled.div`
    display: flex;
    flex: 1;
    min-height: 0;
    padding: 4px 7px 0 4px;
`
const GroupName = styled.div`
    height: 20px;
    flex: none;
    padding-top: 1px;
    background: linear-gradient(#dfe8f5, #cfdbee);
    color: #3e6aaa;
    text-align: center;
    line-height: 18px;
`
const BigButton = styled.button`
    display: flex;
    flex-direction: column;
    align-items: center;
    width: 50px;
    height: 72px;
    flex: none;
    padding-top: 1px;
    white-space: nowrap;
    svg{
        height: 30px;
        margin-bottom: 5px;
    }
    i{
        margin-top: 6px;
    }
`
const SmallColumn = styled.div`
    display: flex;
    flex-direction: column;
    flex: none;
    width: ${p => p.$width};
    margin-left: 6px;
`
const SmallButton = styled.button`
    display: flex;
    align-items: center;
    gap: 4px;
    height: 25px;
    white-space: nowrap;
    &:disabled{
        color: #8d8d8d;
    }
`
const Divider = styled.i`
    width: 1px;
    height: 56px;
    flex: none;
    margin-top: 8px;
    background: #a9bad2;
`
const GalleryBox = styled.div`
    display: flex;
    flex: 1;
    min-width: 0;
    height: 60px;
    border: 1px solid #b3cbe8;
    background: #d5e6f8;
`
const GalleryCells = styled.div`
    display: flex;
    flex: 1;
    min-width: 0;
    overflow: hidden;
`
const Cell = styled.button`
    flex: none;
    padding: 3px;
    border: 1px solid ${p => p.$on ? '#a87a4a' : '#d5e6f8'};
    background: ${p => p.$on ? '#fbb75c' : '#d5e6f8'};
    svg{
        background: #fff;
    }
`
const GalleryScroll = styled.div`
    display: flex;
    flex-direction: column;
    width: 14px;
`
const GalleryArrow = styled.button`
    display: flex;
    flex-direction: column;
    align-items: center;
    justify-content: center;
    flex: 1;
    border: 1px solid #b3cbe8;
    background: ${p => p.$off ? '#ececec' : 'linear-gradient(#d8e7fa, #bcd3f0)'};
`
const ColorButton = styled.button`
    display: flex;
    align-items: flex-start;
    width: 53px;
    flex: none;
    padding: 1px 0 0 11px;
`
/* caption strip laid over the ribbon */
const Caption = styled.div`
    position: absolute;
    left: 345px;
    top: 25px;
    height: 55px;
    padding: 0 10px 0 1px;
    background: #3f48cc;
    color: #ffff00;
    font-family: "Noto Serif CJK SC", "Noto Sans CJK SC", sans-serif;
    font-size: 38px;
    font-weight: 400;
    line-height: 44px;
    white-space: nowrap;
    span{
        font-family: "Liberation Mono", monospace;
        font-size: 33px;
    }
`

const DocTabs = styled.div`
    display: flex;
    justify-content: space-between;
    height: 27px;
    flex: none;
    padding: 3px 5px 0 1px;
    border-bottom: 2px solid #0d3f9b;
    background: linear-gradient(#a2c0e8, #cfe0f6);
    > button:last-child{
        width: 9px;
    }
`
const DocTab = styled.button`
    display: flex;
    align-items: center;
    gap: 2px;
    width: 79px;
    padding-left: 5px;
    border-right: 2px solid #0d3f9b;
    border-radius: 0 3px 0 0;
    background: linear-gradient(#fff, #e4eefb);
    font-weight: bold;
    white-space: nowrap;
`

/* work area */
const Work = styled.main`
    position: relative;
    display: flex;
    flex: 1;
    min-height: 0;
`
const Main = styled.div`
    display: flex;
    flex-direction: column;
    flex: 1;
    min-width: 0;
`
const TopRuler = styled.div`
    display: flex;
    height: 23px;
    flex: none;
    background: #9bb9e2;
`
const Corner = styled.button`
    width: 24px;
    border: 1px solid #4c7bd0;
    background: #b9d0f0;
    padding: 3px;
    i{
        display: block;
        width: 14px;
        height: 14px;
        border: 1px solid #6f86b8;
        background: linear-gradient(#1c3564, #1c3564) 4px 4px / 2px 6px no-repeat, linear-gradient(#1c3564, #1c3564) 4px 8px / 6px 2px no-repeat, #e8eefa;
    }
`
const Track = styled.div`
    position: relative;
    flex: 1;
    min-width: 0;
    overflow: hidden;
    padding-top: 4px;
    background: linear-gradient(#b4cdf0, #b4cdf0) 0 4px / 23px 13px no-repeat, linear-gradient(#fff, #fff) 23px 4px / 100% 13px no-repeat;
`
const TrackScale = styled.div`
    display: flex;
    margin: 0 -6px 0 7px;
`
const RulerMark = styled.span`
    flex: 1;
    min-width: 0;
    height: 19px;
    color: #4b5160;
    font-family: "Liberation Sans", sans-serif;
    font-size: 10px;
    line-height: 13px;
    text-align: center;
    background:
        linear-gradient(#555c6c, #555c6c) 25% 4px / 1px 5px no-repeat,
        linear-gradient(#555c6c, #555c6c) 75% 4px / 1px 5px no-repeat,
        linear-gradient(#77716c, #77716c) 50% 14px / 1px 3px no-repeat;
`
const Indent = styled.svg`
    position: absolute;
    left: 18px;
    top: 1px;
`
const Page = styled.div`
    display: flex;
    flex: 1;
    min-height: 0;
`
const SideRuler = styled.div`
    width: 23px;
    flex: none;
    padding: 0 6px 0 5px;
    overflow: hidden;
    background: #9bb9e2;
`
const SideScale = styled.div`
    display: flex;
    flex-direction: column;
    height: 100%;
    padding-bottom: 5px;
    background: linear-gradient(#b4cdf0 54px, #fff 54px);
    border: solid #cfdff4;
    border-width: 0 1px;
    > span:first-child{
        margin-top: -7px;
    }
`
const SideMark = styled.span`
    display: flex;
    align-items: center;
    justify-content: center;
    flex: 1;
    min-height: 0;
    color: #4b5160;
    font-family: "Liberation Sans", sans-serif;
    font-size: 10px;
    background: linear-gradient(#555c6c, #555c6c) 50% 100% / 5px 1px no-repeat;
    span{
        transform: rotate(-90deg);
    }
`
const Canvas = styled.div`
    position: relative;
    flex: 1;
    min-width: 0;
    overflow: hidden;
    background: #fff;
`
const MarginMark = styled.i`
    position: absolute;
    left: 0;
    top: 25px;
    width: 24px;
    height: 27px;
    border: solid #a8a8a8;
    border-width: 0 1px 1px 0;
`
const Frame = styled.div`
    position: absolute;
    left: 17px;
    top: 48px;
    bottom: -6px;
    width: 1080px;
    padding: 3px 4px;
    border: 2px solid #d0dcdc;
    border-radius: 5px;
    background: #e6fcfb;
`
const FrameInner = styled.div`
    height: 100%;
    border: 2px solid #d0dcdc;
    border-radius: 12px;
    background: #fff;
`
const PaneTab = styled.button`
    position: absolute;
    left: 6px;
    top: 308px;
    display: flex;
    align-items: center;
    width: 12px;
    height: 53px;
    border: 2px solid #d0dcdc;
    border-right: 0;
    border-radius: 4px 0 0 4px;
    background: #e6fcfb;
`
const Wires = styled.svg`
    position: absolute;
    left: 0;
    top: 0;
    width: 100%;
    height: 100%;
    pointer-events: none;
`
const Node = styled.div`
    position: absolute;
    display: flex;
    flex-direction: column;
    align-items: center;
    justify-content: center;
    width: 145px;
    height: 74px;
    padding-bottom: 3px;
    border: 3px solid ${red};
    border-radius: 8px;
    background: #fff;
    color: #000;
    font-family: "Liberation Serif", "Noto Serif CJK SC", "Noto Sans CJK SC", serif;
    font-size: 21px;
    font-weight: 300;
    line-height: 24px;
    white-space: pre;
`
const HScroll = styled.div`
    display: grid;
    grid-template-columns: 81fr 1050fr 292fr;
    height: 17px;
    flex: none;
    border-top: 1px solid #5573a8;
    background: #7896c2;
`
const ArrowButton = styled.button`
    display: flex;
    align-items: center;
    justify-content: ${p => p.$end ? 'flex-end' : 'flex-start'};
    padding: 0 5px;
`
const HThumb = styled.div`
    display: flex;
    align-items: center;
    justify-content: center;
    border: 1px solid #4c6797;
    background: linear-gradient(#eef2f8, #d0d9e6 45%, #b2c1d6 50%, #c9d5e6);
    i{
        width: 7px;
        height: 7px;
        background: repeating-linear-gradient(90deg, #6a7d9c 0 1px, transparent 1px 2px);
    }
`
const Side = styled.div`
    display: flex;
    flex-direction: column;
    width: 17px;
    flex: none;
    background: #a5c3ee;
`
const SplitBox = styled.div`
    height: 5px;
    padding: 2px 4px 0 6px;
    i{
        display: block;
        height: 2px;
        background: #43546c;
    }
`
const RulerToggle = styled.button`
    display: flex;
    align-items: center;
    justify-content: center;
    height: 18px;
    border: 1px solid #8fa3c0;
    background: #bccbe0;
`
const VScroll = styled.div`
    display: flex;
    flex-direction: column;
    flex: 1;
    min-height: 0;
    border-left: 1px solid #a5c3ee;
    background: linear-gradient(90deg, #7896c2, #8aa6cc);
`
const VArrow = styled.button`
    display: flex;
    align-items: center;
    justify-content: center;
    height: 18px;
`
const VThumb = styled.div`
    display: flex;
    align-items: center;
    justify-content: center;
    flex: 243;
    margin: 20px 1px 0 0;
    border: 1px solid #5b76a4;
    border-radius: 2px;
    background: linear-gradient(90deg, #f2f5fa, #d3dce9 45%, #b6c5da 50%, #c9d5e6);
    i{
        width: 8px;
        height: 7px;
        background: repeating-linear-gradient(#6a7d9c 0 1px, transparent 1px 2px);
    }
`
const VSpace = styled.div`
    flex: 262;
`
const Browse = styled.div`
    display: flex;
    flex-direction: column;
    align-items: center;
    gap: 9px;
    height: 68px;
    padding-top: 4px;
`

/* watermark */
const Mark = styled.div`
    position: absolute;
    right: 76px;
    bottom: 6px;
    color: #fff;
    opacity: .8;
    white-space: nowrap;
    pointer-events: none;
    text-shadow: 0 0 2px #999, 0 0 1px #bbb;
`
const MarkRow = styled.div`
    display: flex;
    align-items: flex-end;
    height: 96px;
`
const MarkLatin = styled.span`
    font-family: "Liberation Sans", sans-serif;
    font-size: 57px;
    font-weight: bold;
    line-height: 58px;
`
const MarkPaw = styled.div`
    position: relative;
    align-self: flex-start;
    margin-top: 4px;
    span{
        position: absolute;
        left: 16px;
        top: 38px;
        font-family: "Open Sans", sans-serif;
        font-size: 37px;
        line-height: 40px;
    }
`
const MarkHan = styled.span`
    font-family: "Noto Sans CJK SC", sans-serif;
    font-size: 43px;
    font-weight: 900;
    line-height: 56px;
`
const MarkUrl = styled.div`
    font-family: "Noto Sans", sans-serif;
    font-size: 29px;
    line-height: 34px;
`

/* status bar */
const Status = styled.footer`
    display: flex;
    height: 22px;
    flex: none;
    border-top: 1px solid #5c84c4;
    background: linear-gradient(#d3e3fa, #b4cff5 50%, #c9defa);
    color: #15265c;
`
const StatusItem = styled.div`
    display: flex;
    align-items: center;
    width: ${p => p.$width};
    padding-left: 8px;
    border-right: 1px solid #8fb0e0;
    box-shadow: 1px 0 0 #fff;
    white-space: nowrap;
`
const Lang = styled.span`
    padding-left: 16px;
`
const Macro = styled.svg`
    margin-left: 17px;
`
const StatusRight = styled.div`
    display: flex;
    align-items: center;
    margin-left: auto;
    padding: 0 5px;
    border-left: 1px solid #5c7fb8;
    background: linear-gradient(#b4cff5, #7ea5dc);
`
const Views = styled.div`
    display: flex;
    height: 18px;
    border: 1px solid #7b9bc9;
    border-radius: 2px;
    background: #c1d6f3;
`
const View = styled.button`
    display: flex;
    align-items: center;
    justify-content: center;
    width: 18px;
    background: ${p => p.$on ? 'linear-gradient(#fde3ae, #fbc55c)' : 'transparent'};
`
const Percent = styled.button`
    width: 50px;
    font-size: 13px;
`
const ZoomButton = styled.button`
    width: 16px;
    height: 16px;
`
const Slider = styled.input`
    appearance: none;
    width: 102px;
    height: 16px;
    margin: 0;
    background: linear-gradient(#3f62a0, #3f62a0) 0 8px / 100% 1px no-repeat;
    &::-webkit-slider-thumb{
        appearance: none;
        width: 9px;
        height: 13px;
        border: 1px solid #3a5688;
        border-radius: 1px 1px 5px 5px;
        background: #e9f0fa;
    }
`
const TaskEdge = styled.div`
    display: flex;
    gap: 3px;
    height: 3px;
    flex: none;
    padding: 1px 0 0 76px;
    background: linear-gradient(90deg, #17344e, #2d5878 40%, #1b3a52);
    i{
        width: 58px;
        background: #bccbdc;
    }
`

/* floating desktop tools */
const NetMeter = styled.div`
    position: absolute;
    left: 947px;
    bottom: 35px;
    display: flex;
    align-items: center;
    width: 157px;
    height: 48px;
    border: 1px solid #b5b5b5;
    border-radius: 24px;
    background: linear-gradient(#f5f5f5, #dcdcdc);
    box-shadow: 0 1px 3px #8888;
    color: #000;
`
const Ball = styled.div`
    width: 60px;
    height: 60px;
    flex: none;
    margin-left: -2px;
    border: 3px solid #e4e4e4;
    border-radius: 50%;
    background: radial-gradient(ellipse 24px 8px at 50% 6px, #ffe8d0 0%, #f09050 60%, #f0905000 100%), linear-gradient(#ffac5c, #ff9630 50%, #ff8812);
    box-shadow: inset 0 0 2px 2px #c9560a, 0 0 2px #555;
    color: #fff3e0;
    font-family: "Liberation Sans", sans-serif;
    font-size: 18px;
    font-weight: bold;
    line-height: 54px;
    text-align: center;
`
const Rates = styled.div`
    width: 57px;
    margin-left: 5px;
`
const Rate = styled.div`
    display: flex;
    align-items: center;
    justify-content: space-between;
    height: 19px;
    font-size: 11px;
`
const Boost = styled.button`
    margin-left: 6px;
    border-radius: 50%;
    box-shadow: 0 0 0 2px #d2d2d2;
`
const Ime = styled.div`
    position: absolute;
    left: 903px;
    bottom: 5px;
    display: flex;
    align-items: center;
    gap: 8px;
    width: 157px;
    height: 23px;
    padding-left: 25px;
    border: 1px solid #c8ccd4;
    background: #fff;
    color: #3e4660;
    b{
        font-size: 16px;
    }
`
const ImeLogo = styled.svg`
    position: absolute;
    left: -8px;
    bottom: -1px;
`
